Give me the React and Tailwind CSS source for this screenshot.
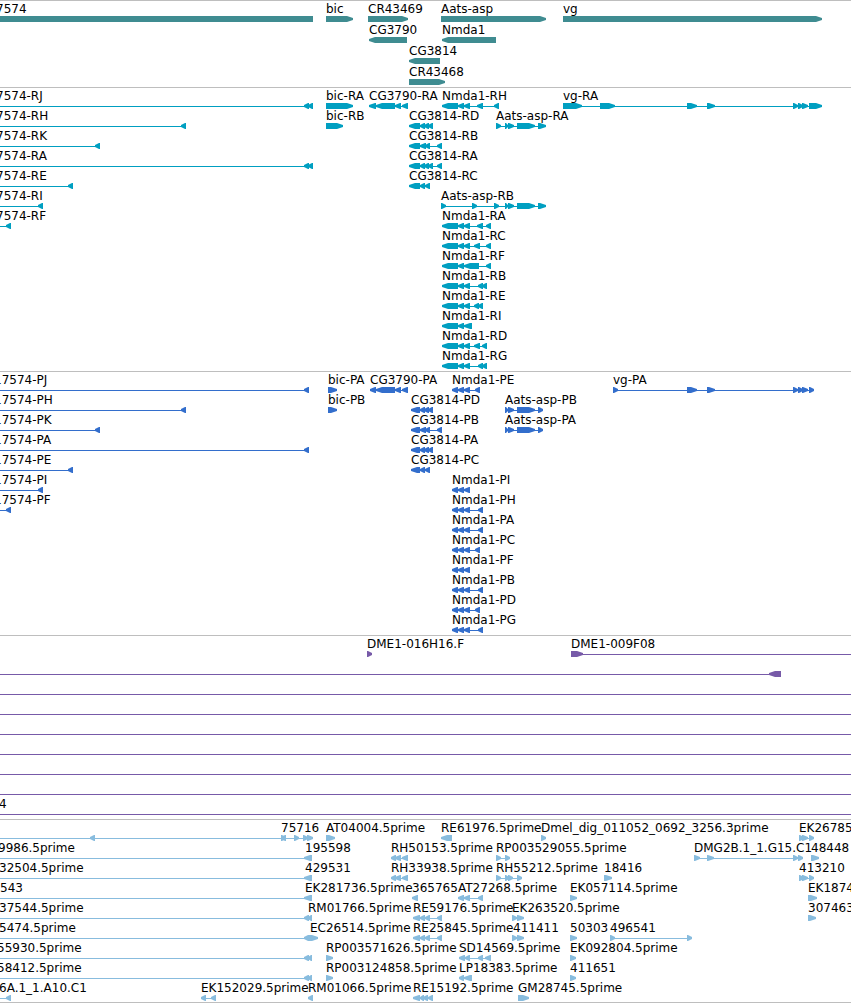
// Each feature: name, label start, strand (1 forward, -1 reverse), exon spans,
// and optionally the span of the connecting line when it exceeds the exons.
const f = (name, x, strand, exons, span) => ({ name, x, strand, exons, span });

const EDGE = 8000;

const left = (name, x, end, exons) => f(name, x, -1, exons, [-10, end]);

const genes = [
  [
    f("7574", -4, 0, [[-10, 313]]),
    f("bic", 326, 1, [[326, 353]]),
    f("CR43469", 368, 1, [[368, 408]]),
    f("Aats-asp", 441, 1, [[441, 546]]),
    f("vg", 563, 1, [[563, 822]]),
  ],
  [f("CG3790", 369, -1, [[369, 407]]), f("Nmda1", 442, -1, [[442, 496]])],
  [f("CG3814", 409, -1, [[409, 440]])],
  [f("CR43468", 409, 1, [[409, 445]])],
];

const nmdaR = [[442, 458], [458, 464]];
const aatsR = [[505, 508], [508, 514], [517, 535], [538, 546]];

const transcripts = [
  [
    left("7574-RJ", -4, 313, [[304, 309], [308, 313]]),
    f("bic-RA", 326, 1, [[326, 353]]),
    f("CG3790-RA", 369, -1, [[369, 376], [376, 395], [395, 401], [402, 408]]),
    f("Nmda1-RH", 442, -1, [...nmdaR, [464, 470], [477, 483], [494, 499]]),
    f("vg-RA", 563, 1, [[563, 582], [600, 615], [687, 697], [707, 715], [793, 798], [798, 803], [802, 808], [809, 822]]),
  ],
  [
    left("7574-RH", -4, 186, [[181, 186]]),
    f("bic-RB", 326, 1, [[326, 343]]),
    f("CG3814-RD", 409, -1, [[409, 420], [420, 425], [424, 429], [428, 433]]),
    f("Aats-asp-RA", 496, 1, [[496, 501], ...aatsR]),
  ],
  [
    left("7574-RK", -4, 100, [[95, 100]]),
    f("CG3814-RB", 409, -1, [[409, 420], [420, 426], [425, 430], [437, 442]]),
  ],
  [
    left("7574-RA", -4, 313, [[304, 309], [308, 313]]),
    f("CG3814-RA", 409, -1, [[409, 420], [420, 425], [424, 429], [428, 433], [437, 442]]),
  ],
  [
    left("7574-RE", -4, 73, [[68, 73]]),
    f("CG3814-RC", 409, -1, [[409, 420], [420, 425], [425, 430]]),
  ],
  [
    left("7574-RI", -4, 43, [[38, 43]]),
    f("Aats-asp-RB", 441, 1, [[441, 446], [472, 477], [494, 499], ...aatsR]),
  ],
  [
    left("7574-RF", -4, 11, [[6, 11]]),
    f("Nmda1-RA", 442, -1, [...nmdaR, [464, 470], [477, 483], [486, 491]]),
  ],
  [f("Nmda1-RC", 442, -1, [...nmdaR, [464, 470], [474, 480], [486, 491]])],
  [f("Nmda1-RF", 442, -1, [...nmdaR, [464, 479], [486, 491]])],
  [f("Nmda1-RB", 442, -1, [...nmdaR, [464, 470], [478, 483], [482, 487]])],
  [f("Nmda1-RE", 442, -1, [...nmdaR, [464, 470], [474, 479], [478, 483]])],
  [f("Nmda1-RI", 442, -1, [...nmdaR, [464, 472]])],
  [f("Nmda1-RD", 442, -1, [...nmdaR, [464, 470], [474, 480], [482, 487]])],
  [f("Nmda1-RG", 442, -1, [...nmdaR, [464, 470], [478, 483], [482, 487]])],
];

const nmdaP = [[452, 458], [458, 464], [464, 470]];
const aatsP = [[505, 508], [508, 514], [517, 535], [538, 543]];

const proteins = [
  [
    left("17574-PJ", -6, 309, [[304, 309]]),
    f("bic-PA", 328, 1, [[328, 337]]),
    f("CG3790-PA", 370, -1, [[370, 376], [376, 395], [395, 401], [402, 408]]),
    f("Nmda1-PE", 452, -1, [...nmdaP, [475, 480]]),
    f("vg-PA", 613, 1, [[613, 618], [687, 697], [707, 715], [793, 798], [798, 803], [802, 808], [809, 814]]),
  ],
  [
    left("17574-PH", -6, 186, [[181, 186]]),
    f("bic-PB", 328, 1, [[328, 337]]),
    f("CG3814-PD", 411, -1, [[411, 420], [420, 425], [424, 429], [428, 433]]),
    f("Aats-asp-PB", 505, 1, aatsP),
  ],
  [
    left("17574-PK", -6, 100, [[95, 100]]),
    f("CG3814-PB", 411, -1, [[411, 420], [420, 426], [425, 430], [437, 442]]),
    f("Aats-asp-PA", 505, 1, aatsP),
  ],
  [
    left("17574-PA", -6, 309, [[304, 309]]),
    f("CG3814-PA", 411, -1, [[411, 420], [420, 425], [424, 429], [428, 433]]),
  ],
  [
    left("17574-PE", -6, 73, [[68, 73]]),
    f("CG3814-PC", 411, -1, [[411, 420], [420, 425], [425, 430]]),
  ],
  [left("17574-PI", -6, 43, [[38, 43]]), f("Nmda1-PI", 452, -1, nmdaP)],
  [left("17574-PF", -6, 11, [[6, 11]]), f("Nmda1-PH", 452, -1, [...nmdaP, [478, 483]])],
  [f("Nmda1-PA", 452, -1, [...nmdaP, [478, 483]])],
  [f("Nmda1-PC", 452, -1, [...nmdaP, [475, 480]])],
  [f("Nmda1-PF", 452, -1, nmdaP)],
  [f("Nmda1-PB", 452, -1, [...nmdaP, [478, 483]])],
  [f("Nmda1-PD", 452, -1, [...nmdaP, [475, 480]])],
  [f("Nmda1-PG", 452, -1, [...nmdaP, [478, 483]])],
];

const through = (name, x) => f(name, x, 1, [], [-10, EDGE]);

const clones = [
  [
    f("DME1-016H16.F", 367, 1, [[367, 372]]),
    f("DME1-009F08", 571, 1, [[571, 583]], [571, EDGE]),
  ],
  [left("", 0, 781, [[769, 781]])],
  [through("", 0)],
  [through("", 0)],
  [through("", 0)],
  [through("", 0)],
  [through("", 0)],
  [through("", 0)],
  [through("4", -1)],
];

const re = [[413, 420], [420, 425], [425, 430], [437, 442]];
const rh = [[391, 396], [395, 401], [402, 408]];
const ek = [[799, 804], [802, 808], [809, 814]];

const ests = [
  [
    left("", 0, 304, [[90, 95], [281, 286]]),
    f("75716", 281, 1, [[281, 286], [294, 299], [303, 308], [307, 313]]),
    f("AT04004.5prime", 326, 1, [[326, 335]]),
    f("RE61976.5prime", 441, -1, [[441, 452]]),
    f("Dmel_dig_011052_0692_3256.3prime", 541, 1, [[541, 546]]),
    f("EK26785", 799, 1, ek),
  ],
  [
    left("9986.5prime", -2, 312, [[304, 312]]),
    f("195598", 305, 1, []),
    f("RH50153.5prime", 391, -1, rh),
    f("RP003529055.5prime", 496, 1, [[496, 501], [505, 510]]),
    f("DMG2B.1_1.G15.C1", 694, 1, [[694, 700], [707, 714], [793, 798], [798, 803]]),
    f("48448", 811, 1, [[811, 819]]),
  ],
  [
    left("32504.5prime", -1, 312, [[304, 312]]),
    f("429531", 305, 1, []),
    f("RH33938.5prime", 391, -1, rh),
    f("RH55212.5prime", 496, 1, [[496, 501], [505, 509], [508, 513], [517, 522]]),
    f("18416", 604, 1, [[604, 612]]),
    f("413210", 799, 1, ek),
  ],
  [
    left("543", 0, 312, [[304, 312]]),
    f("EK281736.5prime", 305, 1, []),
    f("365765", 412, -1, [[412, 418]]),
    f("AT27268.5prime", 458, -1, [[458, 464], [464, 470], [478, 483]]),
    f("EK057114.5prime", 570, 1, [[570, 577]]),
    f("EK1874", 808, 1, [[808, 817]]),
  ],
  [
    left("37544.5prime", -1, 312, [[304, 309], [308, 312]]),
    f("RM01766.5prime", 308, 1, []),
    f("RE59176.5prime", 413, -1, re),
    f("EK263520.5prime", 512, 1, [[512, 517], [517, 524]]),
    f("307463", 808, 1, [[808, 816]]),
  ],
  [
    left("5474.5prime", -1, 312, [[304, 309]]),
    f("EC26514.5prime", 310, 1, [[308, 318]]),
    f("RE25845.5prime", 413, -1, re),
    f("411411", 513, 1, [[512, 517], [517, 524]]),
    f("50303", 570, 1, [[570, 577]]),
    f("496541", 610, 1, [[610, 615], [687, 692]]),
  ],
  [
    left("55930.5prime", -3, 312, [[304, 309], [308, 312]]),
    f("RP003571626.5prime", 326, 1, [[326, 333]]),
    f("SD14569.5prime", 459, -1, [[459, 465], [465, 470], [478, 483], [485, 491]]),
    f("EK092804.5prime", 570, 1, [[570, 576]]),
  ],
  [
    left("58412.5prime", -3, 312, [[304, 309], [308, 312]]),
    f("RP003124858.5prime", 326, 1, [[326, 333]]),
    f("LP18383.5prime", 459, -1, [[459, 464], [464, 472]]),
    f("411651", 570, 1, [[570, 576]]),
  ],
  [
    left("6A.1_1.A10.C1", -1, 11, [[6, 11]]),
    f("EK152029.5prime", 201, -1, [[201, 206], [211, 216]]),
    f("RM01066.5prime", 308, -1, [[308, 313]]),
    f("RE15192.5prime", 413, -1, [[413, 420], [420, 424], [423, 428], [428, 433]]),
    f("GM28745.5prime", 518, 1, [[518, 529]]),
  ],
];

// A bar whose leading end narrows to a two-pixel tip.
function exonPoints([a, b], strand) {
  if (strand === 0) return `${a},0 ${b},0 ${b},6 ${a},6`;
  const head = Math.min(b - a - 1, 6);
  if (strand > 0) {
    const n = b - head;
    return `${a},0 ${n},0 ${b},2 ${b},4 ${n},6 ${a},6`;
  }
  const n = a + head;
  return `${b},0 ${n},0 ${a},2 ${a},4 ${n},6 ${b},6`;
}

function Glyph({ feature }) {
  const { exons, strand } = feature;
  const span =
    feature.span ?? (exons.length > 1 ? [exons[0][0], exons[exons.length - 1][1]] : null);
  return (
    <g>
      {span && <rect x={span[0]} y={3} width={span[1] - span[0]} height={1} />}
      {exons.map((e, i) => (
        <polygon key={i} points={exonPoints(e, strand)} />
      ))}
    </g>
  );
}

function Row({ features, rowClass }) {
  return (
    <div className={`relative ${rowClass}`}>
      {features
        .filter((x) => x.name)
        .map((x) => (
          <span
            key={x.name}
            className="absolute top-0 whitespace-nowrap"
            style={{ left: x.x }}
          >
            {x.name}
          </span>
        ))}
      <svg className="block h-[6px] w-full">
        {features.map((x, i) => (
          <Glyph key={i} feature={x} />
        ))}
      </svg>
    </div>
  );
}

function Track({ rows, className, rowClass = "h-5 pt-[14px]" }) {
  return (
    <section className={`border-t border-[#bebebe] pt-px ${className}`}>
      {rows.map((features, i) => (
        <Row key={i} features={features} rowClass={rowClass} />
      ))}
    </section>
  );
}

export default function App() {
  return (
    <main className="w-full overflow-hidden border-b border-[#bebebe] bg-white font-['DejaVu_Sans',sans-serif] text-[12px] leading-[14px] text-black">
      <Track rows={genes} className="fill-[#3f8c91] pb-px" rowClass="h-[21px] pt-[14px]" />
      <Track rows={transcripts} className="fill-[#009fc1] pb-[2px]" />
      <Track rows={proteins} className="fill-[#336ecc] pb-[2px]" />
      <Track rows={clones} className="fill-[#775aa8] pb-[2px]" />
      <Track rows={ests} className="fill-[#88bcde] pb-px" />
    </main>
  );
}
